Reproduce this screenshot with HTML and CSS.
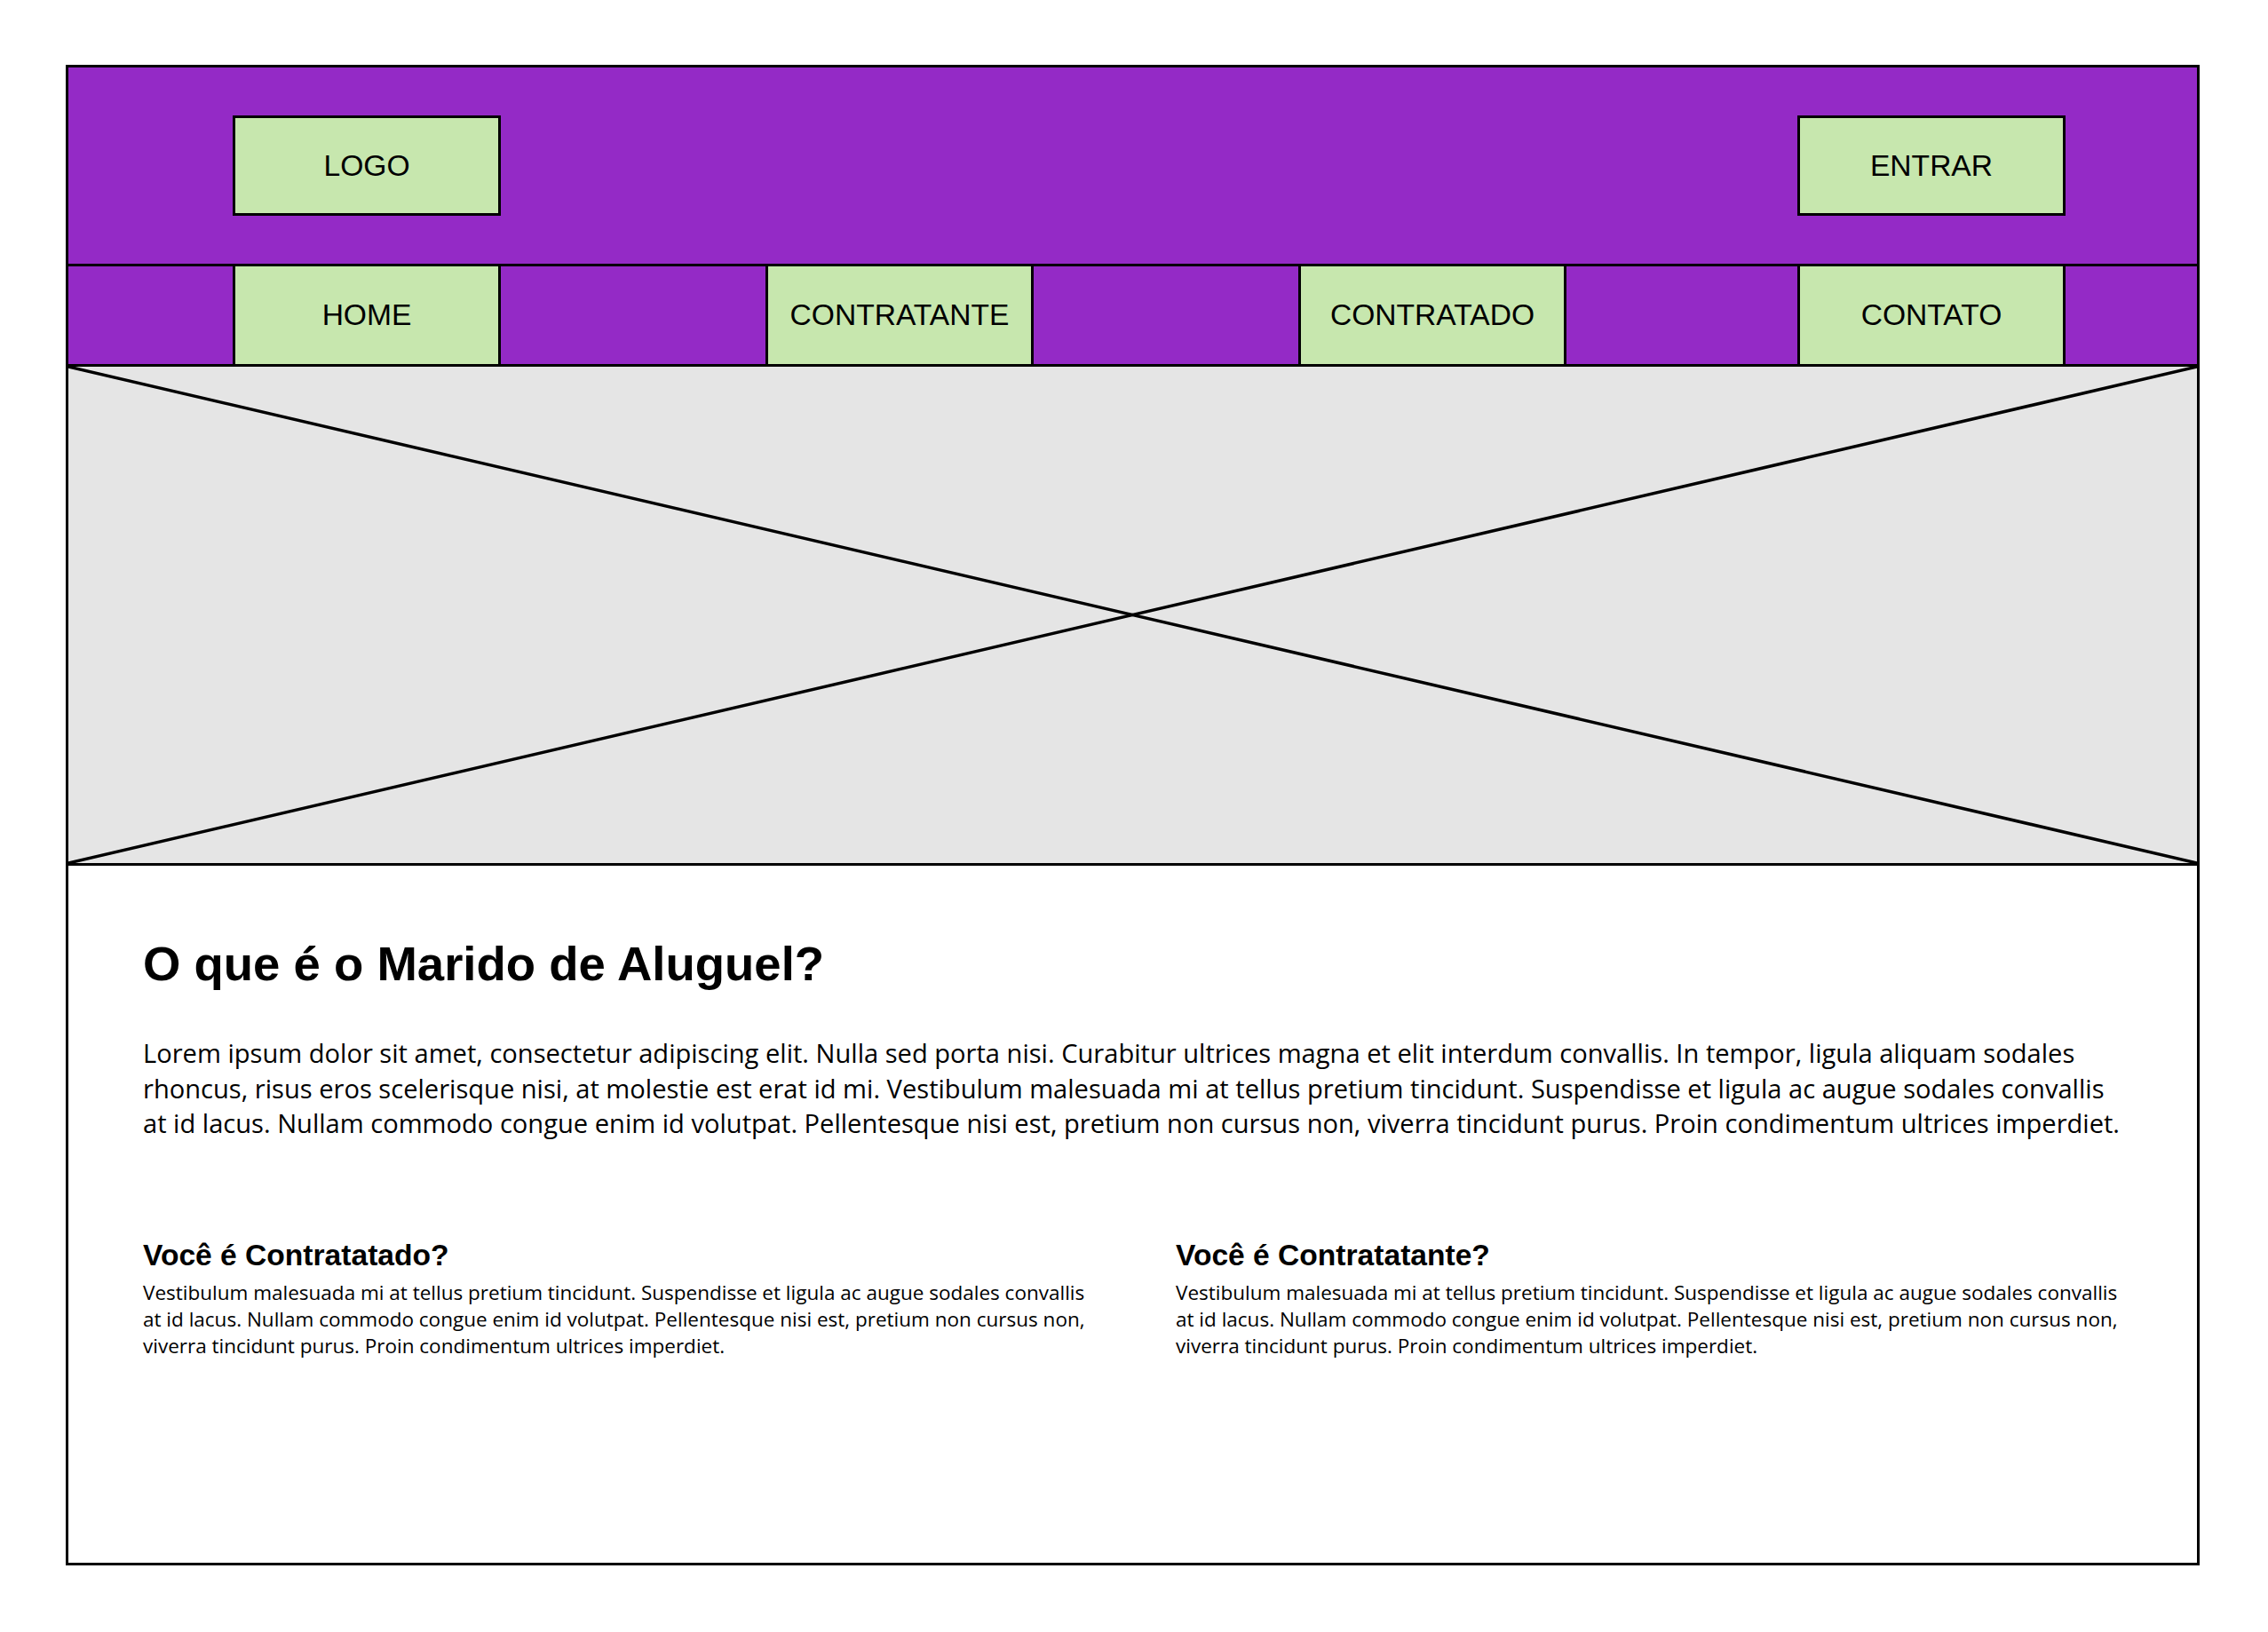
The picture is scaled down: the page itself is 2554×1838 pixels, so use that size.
FILE: index.html
```html
<!DOCTYPE html>
<html lang="pt-BR">
<head>
<meta charset="utf-8">
<title>Marido de Aluguel</title>
<link rel="stylesheet" href="styles.css">
</head>
<body>
<div class="frame">
  <header class="header">
    <div class="header-top">
      <div class="box">LOGO</div>
      <div class="box">ENTRAR</div>
    </div>
    <nav class="nav">
      <div class="nav-group">
        <div class="nav-item">HOME</div>
        <div class="nav-item">CONTRATANTE</div>
        <div class="nav-item">CONTRATADO</div>
      </div>
      <div class="nav-item">CONTATO</div>
    </nav>
  </header>
  <div class="hero">
    <svg class="hero-x" viewBox="0 0 100 100" preserveAspectRatio="none">
      <line x1="0" y1="0" x2="100" y2="100" vector-effect="non-scaling-stroke"/>
      <line x1="0" y1="100" x2="100" y2="0" vector-effect="non-scaling-stroke"/>
    </svg>
  </div>
  <main class="content">
    <h1 class="title">O que é o Marido de Aluguel?</h1>
    <p class="lead">Lorem ipsum dolor sit amet, consectetur adipiscing elit. Nulla sed porta nisi. Curabitur ultrices magna et elit interdum convallis. In tempor, ligula aliquam sodales rhoncus, risus eros scelerisque nisi, at molestie est erat id mi. Vestibulum malesuada mi at tellus pretium tincidunt. Suspendisse et ligula ac augue sodales convallis at id lacus. Nullam commodo congue enim id volutpat. Pellentesque nisi est, pretium non cursus non, viverra tincidunt purus. Proin condimentum ultrices imperdiet.</p>
    <div class="columns">
      <section class="col">
        <h2 class="col-title">Você é Contratatado?</h2>
        <p class="col-text">Vestibulum malesuada mi at tellus pretium tincidunt. Suspendisse et ligula ac augue sodales convallis at id lacus. Nullam commodo congue enim id volutpat. Pellentesque nisi est, pretium non cursus non, viverra tincidunt purus. Proin condimentum ultrices imperdiet.</p>
      </section>
      <section class="col">
        <h2 class="col-title">Você é Contratatante?</h2>
        <p class="col-text">Vestibulum malesuada mi at tellus pretium tincidunt. Suspendisse et ligula ac augue sodales convallis at id lacus. Nullam commodo congue enim id volutpat. Pellentesque nisi est, pretium non cursus non, viverra tincidunt purus. Proin condimentum ultrices imperdiet.</p>
      </section>
    </div>
  </main>
</div>
</body>
</html>
```
FILE: styles.css
```css
* { box-sizing: border-box; }
html, body { margin: 0; padding: 0; background: #ffffff; }
body { font-family: "Liberation Sans", Arial, sans-serif; color: #000; }

.frame {
  margin: 73px 0 0 74px;
  width: 2403px;
  border: 3px solid #000;
}

.header { background: #942ac6; }

.header-top {
  display: flex;
  justify-content: space-between;
  padding: 54px 148px 54px 185px;
  border-bottom: 3px solid #000;
}

.box {
  width: 302px;
  height: 113px;
  border: 3px solid #000;
  background: #c7e7ae;
  display: flex;
  align-items: center;
  justify-content: center;
  font-size: 33.6px;
}

.nav {
  display: flex;
  justify-content: space-between;
  height: 113px;
  padding: 0 148px 0 185px;
  border-bottom: 3px solid #000;
}

.nav-group {
  display: flex;
  gap: 298px;
}

.nav-item {
  flex-shrink: 0;
  width: 302px;
  height: 110px;
  border-left: 3px solid #000;
  border-right: 3px solid #000;
  background: #c7e7ae;
  display: flex;
  align-items: center;
  justify-content: center;
  font-size: 33.6px;
}

.hero {
  height: 562px;
  background: #e5e5e5;
  border-bottom: 3px solid #000;
}

.hero-x {
  display: block;
  width: 100%;
  height: 100%;
}

.hero-x line { stroke: #000; stroke-width: 3.5; }

.content {
  height: 785px;
  padding: 79px 0 0 84px;
}

.title {
  margin: 0;
  font-size: 54.5px;
  font-weight: bold;
  line-height: normal;
}

.lead {
  margin: 50px 0 0;
  width: 2236px;
  font-family: "Open Sans", sans-serif;
  font-size: 29.1px;
  line-height: 39.5px;
}

.columns {
  display: grid;
  grid-template-columns: 1075px 1075px;
  column-gap: 88px;
  margin-top: 109px;
}

.col-title {
  margin: 0;
  font-size: 33.6px;
  font-weight: bold;
  line-height: normal;
}

.col-text {
  margin: 8px 0 0;
  font-family: "Open Sans", sans-serif;
  font-size: 22.5px;
  line-height: 30.3px;
}
```
